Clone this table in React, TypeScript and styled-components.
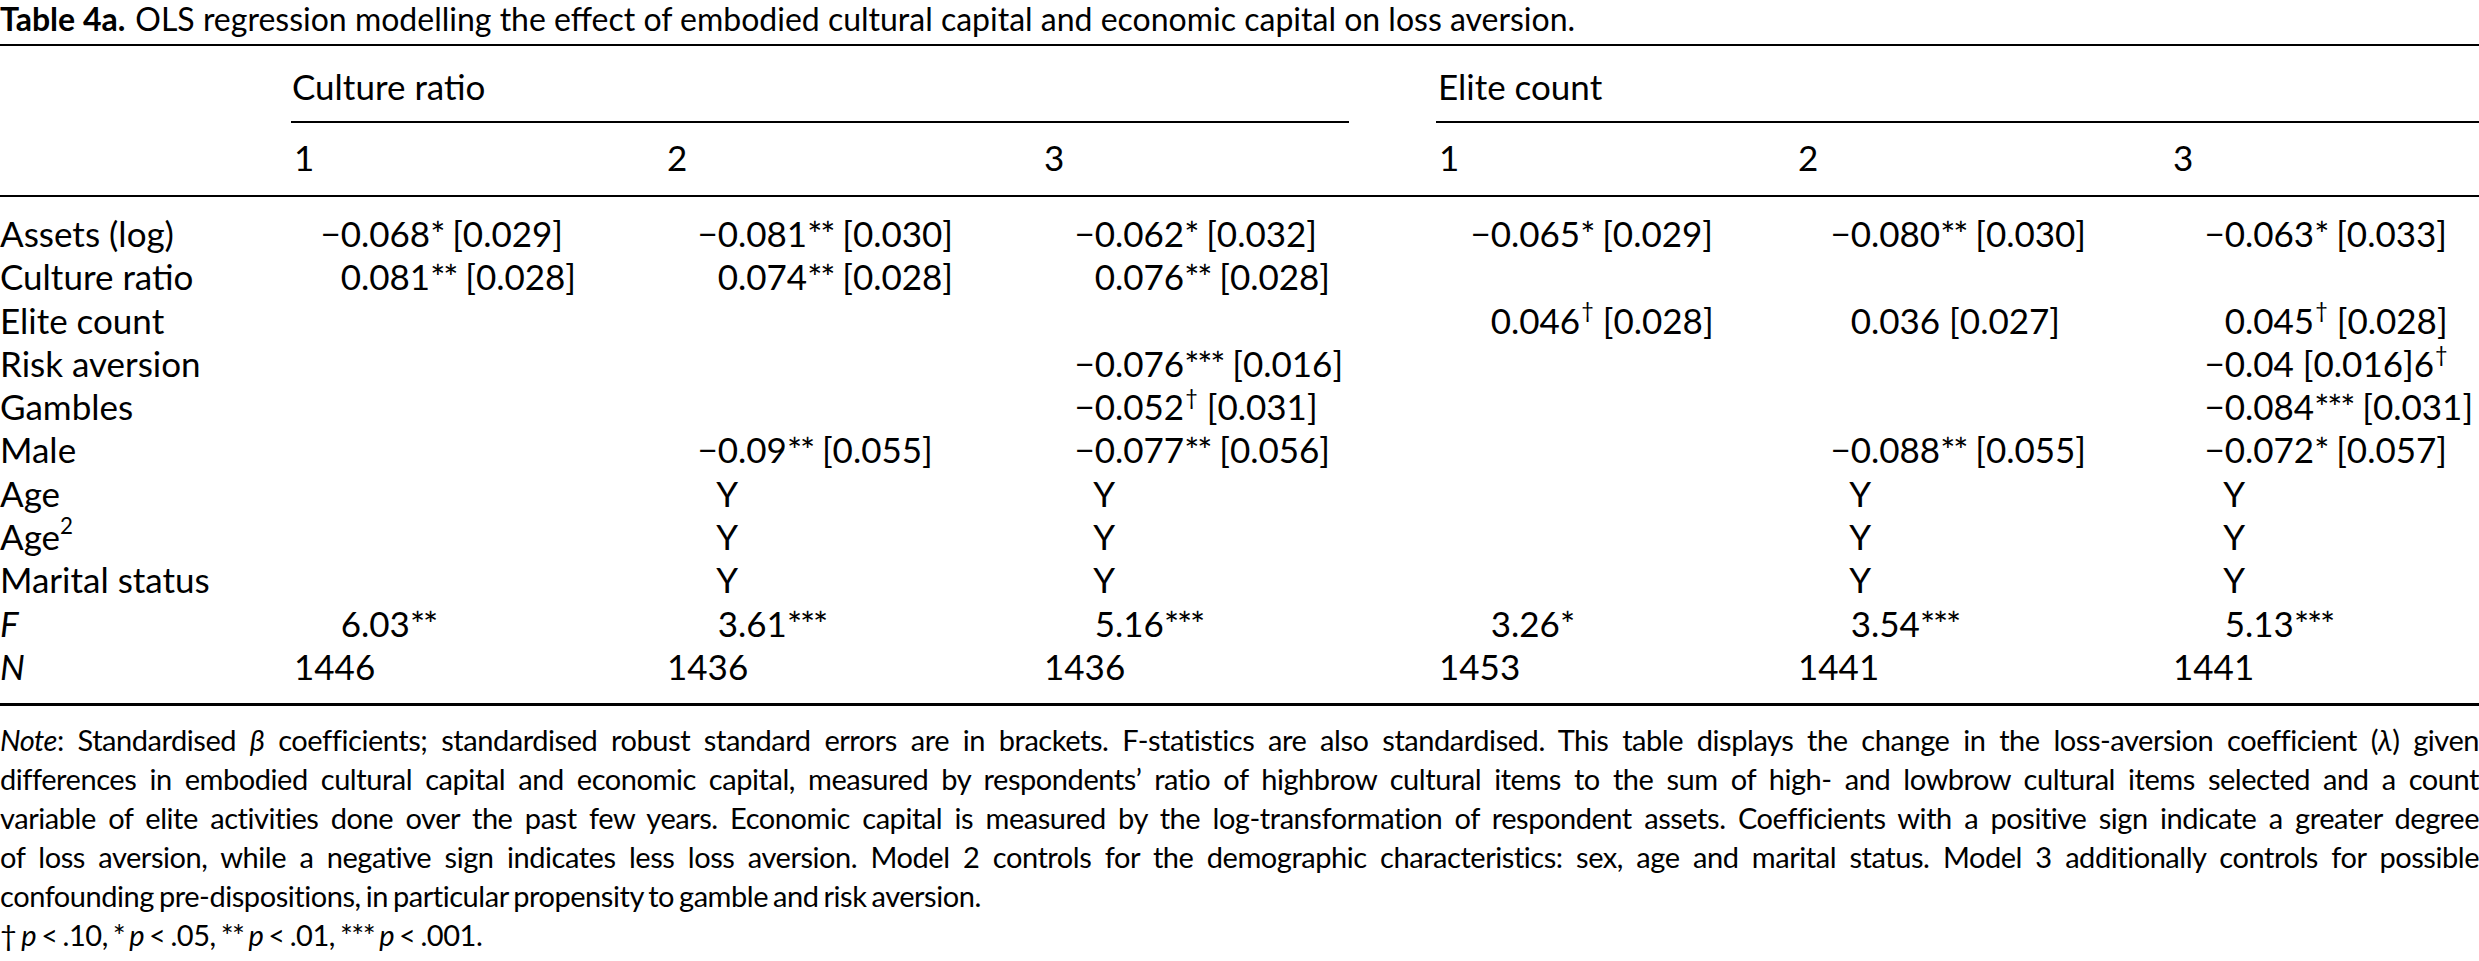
import React from "react";
import styled, { createGlobalStyle } from "styled-components";

const Global = createGlobalStyle`
  html, body { margin: 0; padding: 0; background: #fff; }
  body { font-family: Lato, "Open Sans", sans-serif; color: #000; }
`;

const COLS = "291px 373px 377px 395px 359px 375px 1fr";
const ANCHORS = [70, 74, 74, 75, 76, 75];

const Page = styled.div`
  width: 2479px;
  height: 961px;
  overflow: hidden;
  background: #fff;
`;

const Caption = styled.div`
  height: 44px;
  font-size: 32px;
  line-height: 38px;
  white-space: nowrap;
`;

const CaptionLabel = styled.span`
  font-weight: 700;
  margin-right: 10px;
`;

const Table = styled.div`
  border-top: 2px solid #000;
  border-bottom: 3px solid #000;
  font-size: 35px;
`;

const HeadRow = styled.div<{ $top: number; $bottom: number }>`
  display: grid;
  grid-template-columns: ${COLS};
  padding-top: ${(p) => p.$top}px;
  padding-bottom: ${(p) => p.$bottom}px;
  line-height: 38px;
  border-bottom: 2px solid #000;
`;

const GroupRow = styled.div`
  display: grid;
  grid-template-columns: ${COLS};
`;

const GroupHead = styled.div<{ $from: number; $to: number; $trim: number; $pad: number }>`
  grid-column: ${(p) => p.$from} / ${(p) => p.$to};
  margin-right: ${(p) => p.$trim}px;
  padding-left: ${(p) => p.$pad}px;
  padding-top: 21px;
  padding-bottom: 16px;
  line-height: 38px;
  border-bottom: 2px solid #000;
`;

const ModelNum = styled.div`
  padding-left: 3px;
`;

const Body = styled.div`
  padding-top: 15px;
  padding-bottom: 15px;
`;

const Row = styled.div`
  display: grid;
  grid-template-columns: ${COLS};
  height: 43.3px;
  line-height: 43.3px;
  white-space: nowrap;
`;

const Label = styled.div``;

const Ital = styled.i`
  font-style: italic;
`;

const Sup = styled.span`
  font-size: 0.64em;
  line-height: 0;
  vertical-align: 0.72em;
`;

const Star = styled.span`
  font-size: 1.02em;
  line-height: 0;
  vertical-align: 0;
  letter-spacing: -0.06em;
`;

const Dagger = styled.span`
  font-size: 0.62em;
  line-height: 0;
  vertical-align: 0.7em;
  margin-left: 1px;
`;

const Cell = styled.div`
  display: flex;
  white-space: nowrap;
`;

const IntPart = styled.span<{ $w: number }>`
  display: inline-block;
  width: ${(p) => p.$w}px;
  text-align: right;
  flex: none;
`;

const Count = styled.div`
  padding-left: 3px;
`;

const Notes = styled.div`
  margin-top: 14px;
  font-size: 29px;
  line-height: 39px;
  letter-spacing: -0.45px;
  word-spacing: -2px;
`;

const NoteLine = styled.div<{ $justify?: boolean }>`
  text-align: ${(p) => (p.$justify ? "justify" : "left")};
  text-align-last: ${(p) => (p.$justify ? "justify" : "left")};
`;

const NoteStar = styled.span`
  font-size: 1.05em;
  line-height: 0;
  vertical-align: -0.02em;
  letter-spacing: -0.05em;
`;

function renderMarks(s: string, key: string) {
  const parts = s.split(/(\*+|†)/);
  return parts.map((part, i) => {
    if (!part) return null;
    if (part === "†") return <Dagger key={key + i}>†</Dagger>;
    if (/^\*+$/.test(part)) return <Star key={key + i}>{part}</Star>;
    return <React.Fragment key={key + i}>{part}</React.Fragment>;
  });
}

function Value({ v, col }: { v: string | null; col: number }) {
  if (!v) return <Cell />;
  const dot = v.indexOf(".");
  const intPart = dot >= 0 ? v.slice(0, dot) : v;
  const rest = dot >= 0 ? v.slice(dot) : "";
  return (
    <Cell>
      <IntPart $w={ANCHORS[col]}>{intPart}</IntPart>
      <span>{renderMarks(rest, "v")}</span>
    </Cell>
  );
}

type RowData = { label: React.ReactNode; cells: (string | null)[] };

const rows: RowData[] = [
  {
    label: "Assets (log)",
    cells: ["−0.068* [0.029]", "−0.081** [0.030]", "−0.062* [0.032]", "−0.065* [0.029]", "−0.080** [0.030]", "−0.063* [0.033]"],
  },
  {
    label: "Culture ratio",
    cells: ["0.081** [0.028]", "0.074** [0.028]", "0.076** [0.028]", null, null, null],
  },
  {
    label: "Elite count",
    cells: [null, null, null, "0.046† [0.028]", "0.036 [0.027]", "0.045† [0.028]"],
  },
  {
    label: "Risk aversion",
    cells: [null, null, "−0.076*** [0.016]", null, null, "−0.04 [0.016]6†"],
  },
  {
    label: "Gambles",
    cells: [null, null, "−0.052† [0.031]", null, null, "−0.084*** [0.031]"],
  },
  {
    label: "Male",
    cells: [null, "−0.09** [0.055]", "−0.077** [0.056]", null, "−0.088** [0.055]", "−0.072* [0.057]"],
  },
  { label: "Age", cells: [null, "Y", "Y", null, "Y", "Y"] },
  {
    label: (
      <>
        Age<Sup>2</Sup>
      </>
    ),
    cells: [null, "Y", "Y", null, "Y", "Y"],
  },
  { label: "Marital status", cells: [null, "Y", "Y", null, "Y", "Y"] },
  {
    label: <Ital>F</Ital>,
    cells: ["6.03**", "3.61***", "5.16***", "3.26*", "3.54***", "5.13***"],
  },
];

const counts = ["1446", "1436", "1436", "1453", "1441", "1441"];

export default function App() {
  return (
    <Page>
      <Global />
      <Caption>
        <CaptionLabel>Table 4a.</CaptionLabel>
        OLS regression modelling the effect of embodied cultural capital and economic capital on loss aversion.
      </Caption>
      <Table>
        <GroupRow>
          <div />
          <GroupHead $from={2} $to={5} $trim={87} $pad={1}>
            Culture ratio
          </GroupHead>
          <GroupHead $from={5} $to={8} $trim={0} $pad={2}>
            Elite count
          </GroupHead>
        </GroupRow>
        <HeadRow $top={15} $bottom={19}>
          <div />
          <ModelNum>1</ModelNum>
          <ModelNum>2</ModelNum>
          <ModelNum>3</ModelNum>
          <ModelNum>1</ModelNum>
          <ModelNum>2</ModelNum>
          <ModelNum>3</ModelNum>
        </HeadRow>
        <Body>
          {rows.map((r, i) => (
            <Row key={i}>
              <Label>{r.label}</Label>
              {r.cells.map((c, j) => (
                <Value key={j} v={c} col={j} />
              ))}
            </Row>
          ))}
          <Row>
            <Label>
              <Ital>N</Ital>
            </Label>
            {counts.map((c, j) => (
              <Count key={j}>{c}</Count>
            ))}
          </Row>
        </Body>
      </Table>
      <Notes>
        <NoteLine $justify>
          <Ital>Note</Ital>: Standardised <Ital>β</Ital> coefficients; standardised robust standard errors are in brackets.
          F-statistics are also standardised. This table displays the change in the loss-aversion coefficient (
          <Ital>λ</Ital>) given
        </NoteLine>
        <NoteLine $justify>
          differences in embodied cultural capital and economic capital, measured by respondents’ ratio of highbrow
          cultural items to the sum of high- and lowbrow cultural items selected and a count
        </NoteLine>
        <NoteLine $justify>
          variable of elite activities done over the past few years. Economic capital is measured by the
          log-transformation of respondent assets. Coefficients with a positive sign indicate a greater degree
        </NoteLine>
        <NoteLine $justify>
          of loss aversion, while a negative sign indicates less loss aversion. Model 2 controls for the demographic
          characteristics: sex, age and marital status. Model 3 additionally controls for possible
        </NoteLine>
        <NoteLine>confounding pre-dispositions, in particular propensity to gamble and risk aversion.</NoteLine>
        <NoteLine>
          † <Ital>p</Ital> &lt; .10, <NoteStar>*</NoteStar> <Ital>p</Ital> &lt; .05, <NoteStar>**</NoteStar>{" "}
          <Ital>p</Ital> &lt; .01, <NoteStar>***</NoteStar> <Ital>p</Ital> &lt; .001.
        </NoteLine>
      </Notes>
    </Page>
  );
}
